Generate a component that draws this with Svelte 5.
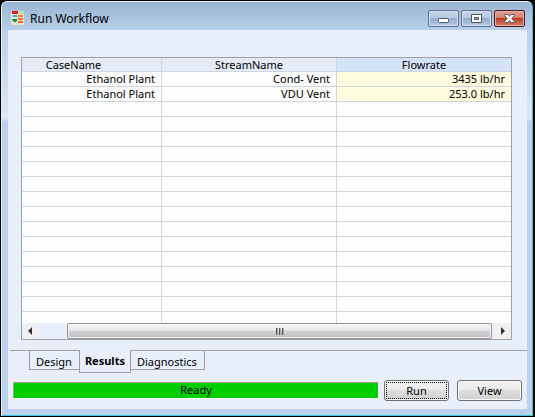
<script>
  const rows = [
    ['Ethanol Plant', 'Cond- Vent', '3435 lb/hr'],
    ['Ethanol Plant', 'VDU Vent', '253.0 lb/hr'],
    ...Array.from({ length: 15 }, () => ['', '', ''])
  ];
  const tabs = ['Design', 'Results', 'Diagnostics'];
  let active = $state('Results');
</script>

<div class="desktop">
  <div class="window">
    <header>
      <svg class="logo" width="14" height="14" viewBox="0 0 14 14" aria-hidden="true">
        <rect width="13" height="14" rx="1" fill="#e4e6d0" />
        <path d="M1 0h6v3H1z" fill="#d8202c" />
        <path d="M7 0h6v3H7z" fill="#c3dfb8" />
        <path d="M2 4h4v2H2z" fill="#35a9e8" />
        <path d="M7 4h5v2H7zM7 7h5v2H7zM7 10h5v2H7z" fill="#f8702c" />
        <circle cx="4" cy="9.5" r="1.8" fill="#168b48" />
        <path d="M1 8h5v1.5H1z" fill="#168b48" />
      </svg>
      <h1>Run Workflow</h1>
      <div class="controls">
        <button aria-label="Minimize">
          <svg width="13" height="11" viewBox="0 0 13 11"><rect x="1.5" y="5.5" width="10" height="4" rx="1" fill="#fff" stroke="#535666" /></svg>
        </button>
        <button aria-label="Maximize">
          <svg width="13" height="11" viewBox="0 0 13 11"><path fill-rule="evenodd" d="M1.5 1.5h10v8h-10zM4.5 4.5v2h4v-2z" fill="#fff" stroke="#535666" stroke-linejoin="round" /></svg>
        </button>
        <button class="close" aria-label="Close">
          <svg width="13" height="11" viewBox="0 0 13 11"><path d="M1.5 1.5h3.2l1.8 1.7 1.8-1.7h3.2v1L8.8 5.5l2.7 3v1H8.3L6.5 7.8 4.7 9.5H1.5v-1l2.7-3-2.7-3z" fill="#fff" stroke="#535666" stroke-linejoin="round" /></svg>
        </button>
      </div>
    </header>

    <main>
      <section class="grid">
        <div class="view">
          <table>
            <colgroup><col class="case" /><col class="stream" /><col /></colgroup>
            <thead>
              <tr><th class="scrolled">CaseName</th><th>StreamName</th><th class="selected">Flowrate</th></tr>
            </thead>
            <tbody>
              {#each rows as row}
                <tr>
                  {#each row as cell, i}
                    <td class:value={i === 2 && cell}>{cell}</td>
                  {/each}
                </tr>
              {/each}
            </tbody>
          </table>
        </div>
        <div class="scroll">
          <button aria-label="Scroll left"><svg width="4" height="8" viewBox="0 0 4 8"><path d="M4 0v8L0 4z" fill="#333" /></svg></button>
          <div class="track">
            <div class="thumb"><i></i><i></i><i></i></div>
          </div>
          <button aria-label="Scroll right"><svg width="4" height="8" viewBox="0 0 4 8"><path d="M0 0v8l4-4z" fill="#333" /></svg></button>
        </div>
      </section>

      <div class="tabs" role="tablist">
        {#each tabs as tab}
          <button role="tab" aria-selected={active === tab} class:active={active === tab} onclick={() => (active = tab)}>{tab}</button>
        {/each}
      </div>

      <footer>
        <div class="status" role="status">Ready</div>
        <button class="action focused">Run</button>
        <button class="action">View</button>
      </footer>
    </main>
  </div>
</div>

<style>
  :global(body) { background: #000; }
  * { box-sizing: border-box; }
  .desktop {
    height: 100vh;
    padding: 1px 2px 1px 1px;
    font: 11px/14px "Noto Sans", "Open Sans", sans-serif;
    color: #000;
  }
  button { font: inherit; color: inherit; padding: 0; margin: 0; }
  .window {
    height: 100%;
    display: flex;
    flex-direction: column;
    padding: 0 5px 6px 6px;
    border: 1px solid #36c3dc;
    border-top-color: #e9f1fa;
    border-left-color: #eaf3fb;
    border-radius: 6px 6px 0 0;
    background: linear-gradient(#9ab4d2, #b9d1ea 29px, #dbe8f5 116px, #b9d1ea 120px);
  }
  header {
    height: 28px;
    flex: none;
    display: flex;
    align-items: center;
    padding: 4px 2px 0 3px;
    gap: 5px;
  }
  .logo { flex: none; }
  h1 { flex: 1; margin: 0; padding-top: 2px; font-size: 12px; font-weight: 400; line-height: 16px; }
  .controls { display: flex; gap: 2px; }
  .controls button {
    width: 31px;
    height: 17px;
    display: flex;
    align-items: center;
    justify-content: center;
    border: 1px solid #596f8c;
    border-radius: 2px;
    background: linear-gradient(#c4d5e8, #b3c9e0 48%, #92aeca 50%, #b1cae2);
    box-shadow: inset 0 0 0 1px #d3e1f0;
  }
  .controls .close {
    border-color: #4f1820;
    background: linear-gradient(#e2a090, #d2806e 48%, #b93d25 50%, #d38466);
    box-shadow: inset 0 0 0 1px #e5b1a6;
  }
  main {
    flex: 1;
    min-height: 0;
    display: flex;
    flex-direction: column;
    background: #e8effa;
  }
  .grid {
    flex: 1;
    min-height: 0;
    display: flex;
    flex-direction: column;
    margin: 27px 15px 0 13px;
    border: 1px solid #a0a0a0;
  }
  .view { flex: 1; min-height: 0; overflow: hidden; background: #fdfdfd; }
  table { width: 100%; table-layout: fixed; border-collapse: separate; border-spacing: 0; }
  .case { width: 140px; }
  .stream { width: 175px; }
  th, td {
    height: 15px;
    padding: 0 6px;
    border: 0 solid #ced6e4;
    border-width: 0 1px 1px 0;
    line-height: 14px;
    font-weight: 400;
    white-space: nowrap;
  }
  th { height: 14px; line-height: 13px; padding: 0; text-align: center; background: #e4ebf7; }
  th.scrolled { padding-right: 36px; }
  th.selected { background: #d3e3fa; }
  th:last-child, td:last-child { border-right: 0; }
  td { text-align: right; }
  td.value { background: #fffbdc; }
  .scroll { height: 16px; flex: none; display: flex; background: #e8effa; }
  .scroll button {
    width: 16px;
    display: flex;
    align-items: center;
    justify-content: center;
    border: 0;
    background: #f0f0f1;
  }
  .track { flex: 1; display: flex; padding: 0 3px 0 29px; }
  .thumb {
    flex: 1;
    display: flex;
    align-items: center;
    justify-content: center;
    gap: 1px;
    border: 1px solid #949494;
    border-radius: 2px;
    background: linear-gradient(#f5f5f5, #e6e6e7 45%, #d1d1d3 50%, #bfc0c3);
    box-shadow: inset 0 0 0 1px #f3f3f3;
  }
  .thumb i { width: 2px; height: 7px; background: linear-gradient(90deg, #555 50%, #aaa 50%); }
  .tabs {
    height: 23px;
    flex: none;
    display: flex;
    align-items: flex-start;
    margin: 10px 0 0 2px;
    padding-left: 19px;
    border-top: 1px solid #a0a0a0;
  }
  .tabs button {
    height: 19px;
    padding: 1px 7px 0 6px;
    line-height: 20px;
    border: 1px solid #a0a0a0;
    border-top: 0;
    background: #e8effa;
  }
  .tabs button + button { border-left: 0; }
  .tabs .active {
    height: 23px;
    margin: -1px 0 0 -1px;
    padding: 0 5px;
    font-weight: 700;
  }
  .tabs button.active { border-left: 1px solid #a0a0a0; }
  footer { flex: none; display: flex; align-items: center; padding: 7px 5px 8px; }
  .status {
    flex: 1;
    height: 17px;
    margin-right: 5px;
    border: 1px solid #a0a0a0;
    border-right-color: #fff;
    border-bottom-color: #fff;
    background: #00ce00;
    text-align: center;
    line-height: 14px;
  }
  .action {
    width: 65px;
    height: 21px;
    line-height: 19px;
    border: 1px solid #707070;
    border-radius: 3px;
    background: linear-gradient(#f2f2f2, #ebebeb 48%, #dddddd 50%, #cfcfcf);
    box-shadow: inset 0 0 0 1px #fafafa;
  }
  .action + .action { margin-left: 8px; }
  .focused { outline: 1px dotted #000; outline-offset: -3px; }
</style>
